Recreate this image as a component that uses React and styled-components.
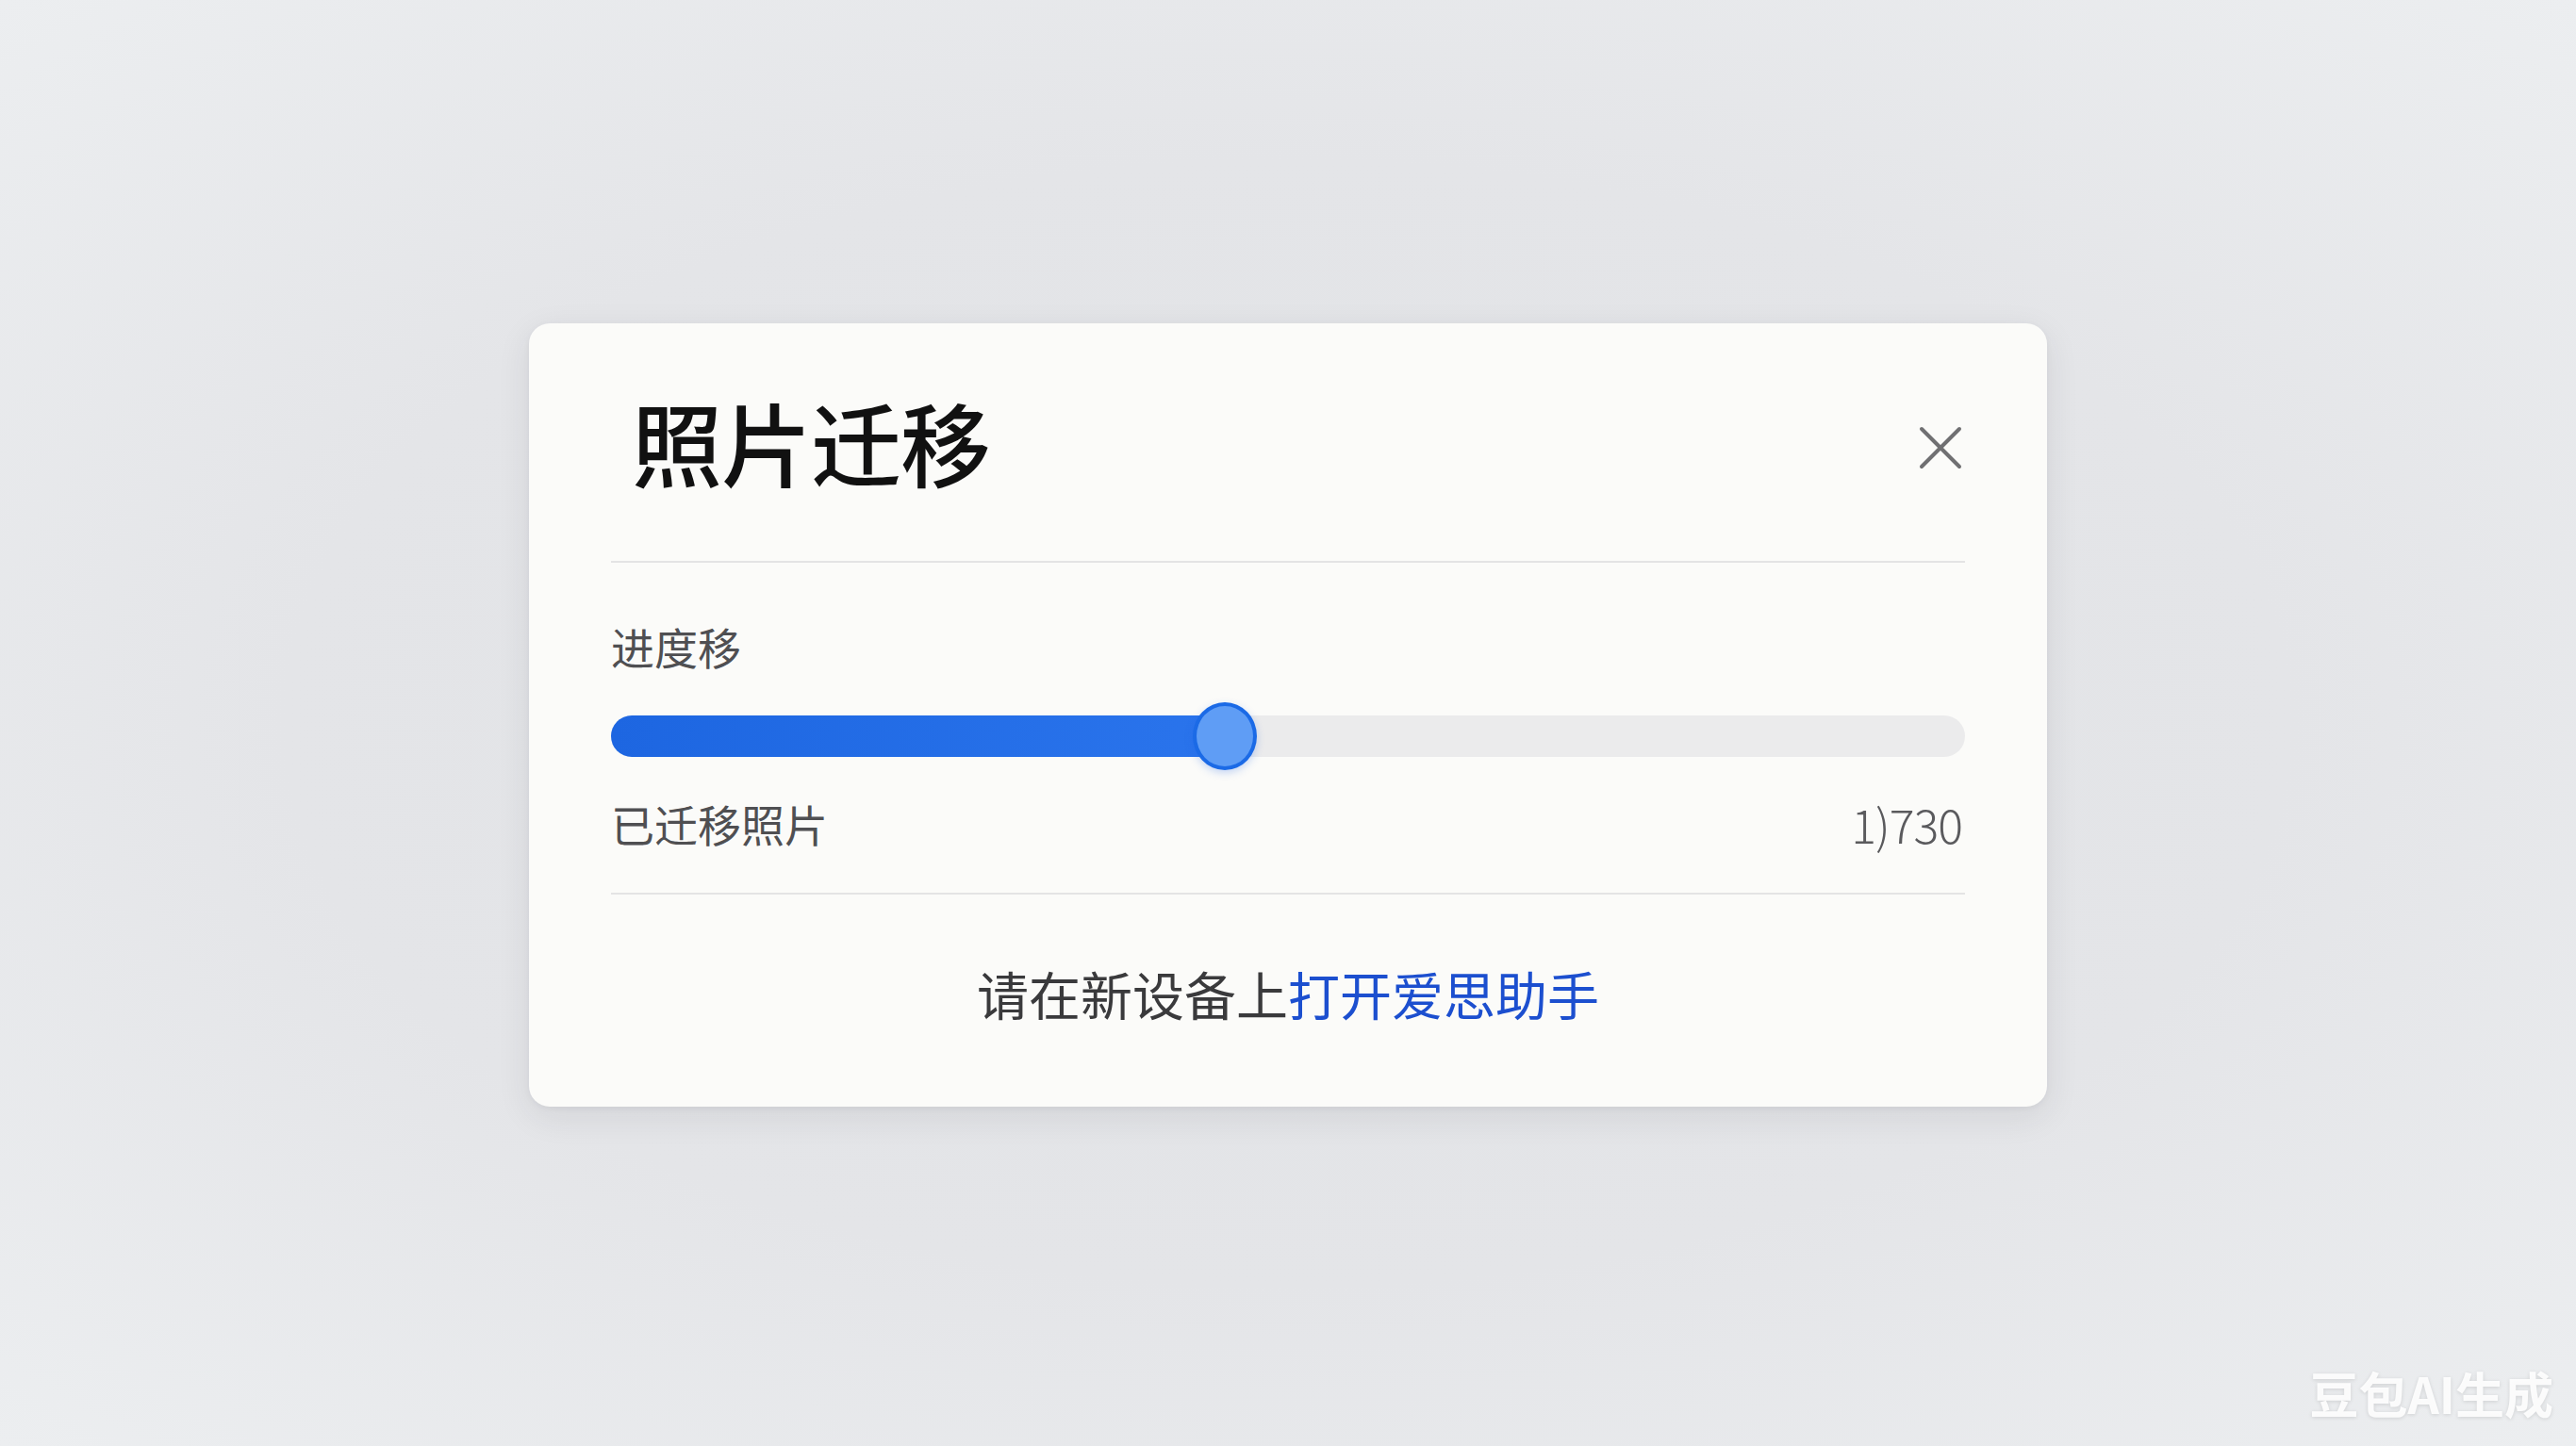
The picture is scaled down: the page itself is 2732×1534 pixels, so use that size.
import React from "react";
import styled, { createGlobalStyle } from "styled-components";

const GlobalStyle = createGlobalStyle`
    html, body {
        margin: 0;
        padding: 0;
        height: 100%;
    }
    body {
        font-family: "Noto Sans CJK SC", "Noto Sans", sans-serif;
    }
    #root {
        height: 100%;
    }
`;

const progress = 0.453;

const App = () => {
    return (
        <>
            <GlobalStyle />
            <Page>
                <Card>
                    <Header>
                        <Title>照片迁移</Title>
                        <CloseButton aria-label="关闭">
                            <svg width="48" height="48" viewBox="0 0 48 48">
                                <path
                                    d="M4 4 L44 44 M44 4 L4 44"
                                    stroke="#707072"
                                    strokeWidth="4"
                                    strokeLinecap="round"
                                    fill="none"
                                />
                            </svg>
                        </CloseButton>
                    </Header>

                    <Section>
                        <Label>进度移</Label>
                        <Track>
                            <Fill style={{ width: `${progress * 100}%` }} />
                            <Thumb style={{ left: `${progress * 100}%` }} />
                        </Track>
                        <StatsRow>
                            <Label>已迁移照片</Label>
                            <Count>1)730</Count>
                        </StatsRow>
                    </Section>

                    <Footer>
                        请在新设备上<FooterLink>打开爱思助手</FooterLink>
                    </Footer>
                </Card>
                <Watermark>豆包AI生成</Watermark>
            </Page>
        </>
    );
};

export default App;

const Page = styled.div`
    position: relative;
    width: 100%;
    height: 100vh;
    display: flex;
    align-items: center;
    justify-content: center;
    background: radial-gradient(
        ellipse at center,
        #e1e3e6 0%,
        #e4e5e8 55%,
        #eceef0 100%
    );
    overflow: hidden;
`;

const Card = styled.div`
    box-sizing: border-box;
    width: 1610px;
    margin-top: -18px;
    padding: 0 87px 88px;
    background: #fbfbf9;
    border-radius: 22px;
    box-shadow: 0 10px 36px rgba(40, 45, 55, 0.09),
        0 2px 6px rgba(40, 45, 55, 0.05);
`;

const Header = styled.div`
    display: flex;
    align-items: center;
    justify-content: space-between;
    padding: 77px 0 69px 22px;
    border-bottom: 2px solid #e4e4e4;
`;

const Title = styled.h1`
    margin: 0 0 10px;
    font-size: 96px;
    line-height: 1;
    font-weight: 500;
    color: #111;
    letter-spacing: -1px;
`;

const CloseButton = styled.button`
    display: flex;
    align-items: center;
    justify-content: center;
    padding: 0;
    margin: 4px 2px 0 0;
    border: none;
    background: none;
    cursor: pointer;
`;

const Section = styled.div`
    display: flex;
    flex-direction: column;
    padding: 61px 0 46px;
    border-bottom: 2px solid #e4e4e4;
`;

const Label = styled.span`
    font-size: 46px;
    line-height: 55px;
    color: #4f4f52;
    font-weight: 400;
`;

const Track = styled.div`
    position: relative;
    height: 44px;
    margin: 46px 0 43px;
    border-radius: 22px;
    background: #ebebec;
`;

const Fill = styled.div`
    height: 100%;
    border-radius: 22px;
    background: linear-gradient(90deg, #1d66e1 0%, #2a74ec 100%);
`;

const Thumb = styled.div`
    position: absolute;
    top: 50%;
    width: 60px;
    height: 64px;
    transform: translate(-50%, -50%);
    border-radius: 50%;
    background: #5f9df5;
    border: 4px solid #1b6ae6;
    box-shadow: 0 3px 8px rgba(30, 100, 230, 0.25);
`;

const StatsRow = styled.div`
    display: flex;
    align-items: center;
    justify-content: space-between;
`;

const Count = styled.span`
    font-size: 50px;
    line-height: 55px;
    font-weight: 300;
    color: #5a5a5d;
    letter-spacing: -1px;
    margin-right: 3px;
`;

const Footer = styled.p`
    margin: 71px 0 0;
    text-align: center;
    font-size: 55px;
    line-height: 66px;
    color: #3a3a3c;
`;

const FooterLink = styled.span`
    color: #1c4fcf;
`;

const Watermark = styled.div`
    position: absolute;
    right: 24px;
    bottom: 30px;
    font-size: 52px;
    line-height: 1;
    font-weight: 700;
    color: rgba(255, 255, 255, 0.9);
    text-shadow: 0 1px 4px rgba(0, 0, 0, 0.12);
`;
